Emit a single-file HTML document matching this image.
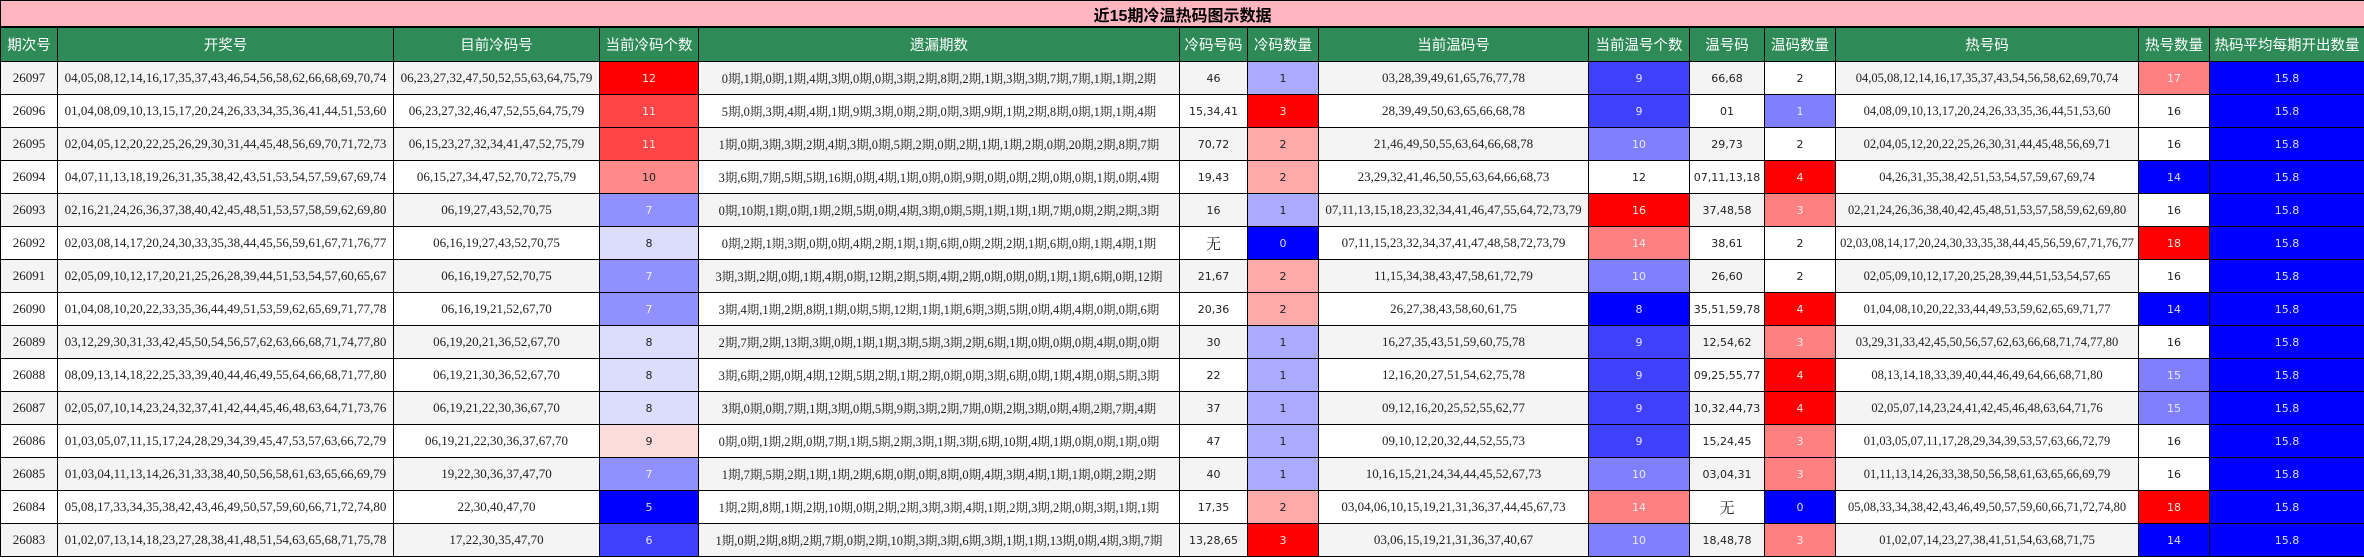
<!DOCTYPE html>
<html><head><meta charset="utf-8">
<style>
html,body{margin:0;padding:0;background:#fff;width:2364px;height:558px;overflow:hidden}
table{border-collapse:collapse;table-layout:fixed;width:2364px;font-family:"Liberation Serif","Noto Serif CJK SC","Noto Sans CJK SC",serif;font-size:13px;color:#222}
td,th{border:1px solid #000;text-align:center;padding:0;white-space:nowrap;overflow:hidden}
.t td{background:#ffb6c1;height:25px;font:bold 16px "Liberation Sans","Noto Sans CJK SC",sans-serif;color:#000;border-bottom:2px solid #000}
.h th{background:#2e8b57;color:#fff;height:33px;font:14.5px "Liberation Sans","Noto Sans CJK SC",sans-serif}
tr.d td{height:32px}
tr.g td{background:#f4f4f4}
.s{font-family:"DejaVu Sans","Noto Sans CJK SC",sans-serif;font-size:11px}
.y{font-size:12.5px}
.hc{font-size:12.5px}
tr td.c0{background:#ff0000;color:#f2e0e0}
tr td.c1{background:#ff4545;color:#f4e4e4}
tr td.c2{background:#ff8080;color:#fbe8e8}
tr td.c3{background:#ff8a8a}
tr td.pk{background:#ffaaaa}
tr td.lp{background:#ffdcdc}
tr td.lb{background:#dcdcff}
tr td.b1{background:#aaaaff}
tr td.b2{background:#8080ff;color:#e6e6ff}
tr td.b3{background:#9090ff;color:#eeeeff}
tr td.b4{background:#4040ff;color:#e0e0ff}
tr td.b5{background:#0000ff;color:#dcdcff}
tr td.w{background:#fff}
</style></head><body>
<table>
<colgroup><col style="width:57px"><col style="width:336px"><col style="width:206px"><col style="width:99px"><col style="width:481px"><col style="width:68px"><col style="width:71px"><col style="width:270px"><col style="width:101px"><col style="width:75px"><col style="width:71px"><col style="width:303px"><col style="width:71px"><col style="width:155px"></colgroup>
<tr class="t"><td colspan="14">近15期冷温热码图示数据</td></tr>
<tr class="h"><th>期次号</th><th>开奖号</th><th>目前冷码号</th><th>当前冷码个数</th><th>遗漏期数</th><th>冷码号码</th><th>冷码数量</th><th>当前温码号</th><th>当前温号个数</th><th>温号码</th><th>温码数量</th><th>热号码</th><th>热号数量</th><th>热码平均每期开出数量</th></tr>
<tr class="d g"><td>26097</td><td>04,05,08,12,14,16,17,35,37,43,46,54,56,58,62,66,68,69,70,74</td><td>06,23,27,32,47,50,52,55,63,64,75,79</td><td class="s c0">12</td><td class="y">0期,1期,0期,1期,4期,3期,0期,0期,3期,2期,8期,2期,1期,3期,3期,7期,7期,1期,1期,2期</td><td class="s">46</td><td class="s b1">1</td><td>03,28,39,49,61,65,76,77,78</td><td class="s b4">9</td><td class="s">66,68</td><td class="s w">2</td><td class="hc">04,05,08,12,14,16,17,35,37,43,54,56,58,62,69,70,74</td><td class="s c2">17</td><td class="s b5">15.8</td></tr>
<tr class="d"><td>26096</td><td>01,04,08,09,10,13,15,17,20,24,26,33,34,35,36,41,44,51,53,60</td><td>06,23,27,32,46,47,52,55,64,75,79</td><td class="s c1">11</td><td class="y">5期,0期,3期,4期,4期,1期,9期,3期,0期,2期,0期,3期,9期,1期,2期,8期,0期,1期,1期,4期</td><td class="s">15,34,41</td><td class="s c0">3</td><td>28,39,49,50,63,65,66,68,78</td><td class="s b4">9</td><td class="s">01</td><td class="s b2">1</td><td class="hc">04,08,09,10,13,17,20,24,26,33,35,36,44,51,53,60</td><td class="s">16</td><td class="s b5">15.8</td></tr>
<tr class="d g"><td>26095</td><td>02,04,05,12,20,22,25,26,29,30,31,44,45,48,56,69,70,71,72,73</td><td>06,15,23,27,32,34,41,47,52,75,79</td><td class="s c1">11</td><td class="y">1期,0期,3期,3期,2期,4期,3期,0期,5期,2期,0期,2期,1期,1期,2期,0期,20期,2期,8期,7期</td><td class="s">70,72</td><td class="s pk">2</td><td>21,46,49,50,55,63,64,66,68,78</td><td class="s b2">10</td><td class="s">29,73</td><td class="s w">2</td><td class="hc">02,04,05,12,20,22,25,26,30,31,44,45,48,56,69,71</td><td class="s w">16</td><td class="s b5">15.8</td></tr>
<tr class="d"><td>26094</td><td>04,07,11,13,18,19,26,31,35,38,42,43,51,53,54,57,59,67,69,74</td><td>06,15,27,34,47,52,70,72,75,79</td><td class="s c3">10</td><td class="y">3期,6期,7期,5期,5期,16期,0期,4期,1期,0期,0期,9期,0期,0期,2期,0期,0期,1期,0期,4期</td><td class="s">19,43</td><td class="s pk">2</td><td>23,29,32,41,46,50,55,63,64,66,68,73</td><td class="s w">12</td><td class="s">07,11,13,18</td><td class="s c0">4</td><td class="hc">04,26,31,35,38,42,51,53,54,57,59,67,69,74</td><td class="s b5">14</td><td class="s b5">15.8</td></tr>
<tr class="d g"><td>26093</td><td>02,16,21,24,26,36,37,38,40,42,45,48,51,53,57,58,59,62,69,80</td><td>06,19,27,43,52,70,75</td><td class="s b3">7</td><td class="y">0期,10期,1期,0期,1期,2期,5期,0期,4期,3期,0期,5期,1期,1期,1期,7期,0期,2期,2期,3期</td><td class="s">16</td><td class="s b1">1</td><td>07,11,13,15,18,23,32,34,41,46,47,55,64,72,73,79</td><td class="s c0">16</td><td class="s">37,48,58</td><td class="s c2">3</td><td class="hc">02,21,24,26,36,38,40,42,45,48,51,53,57,58,59,62,69,80</td><td class="s w">16</td><td class="s b5">15.8</td></tr>
<tr class="d"><td>26092</td><td>02,03,08,14,17,20,24,30,33,35,38,44,45,56,59,61,67,71,76,77</td><td>06,16,19,27,43,52,70,75</td><td class="s lb">8</td><td class="y">0期,2期,1期,3期,0期,0期,4期,2期,1期,1期,6期,0期,2期,2期,1期,6期,0期,1期,4期,1期</td><td style="font-size:15px">无</td><td class="s b5">0</td><td>07,11,15,23,32,34,37,41,47,48,58,72,73,79</td><td class="s c2">14</td><td class="s">38,61</td><td class="s w">2</td><td class="hc">02,03,08,14,17,20,24,30,33,35,38,44,45,56,59,67,71,76,77</td><td class="s c0">18</td><td class="s b5">15.8</td></tr>
<tr class="d g"><td>26091</td><td>02,05,09,10,12,17,20,21,25,26,28,39,44,51,53,54,57,60,65,67</td><td>06,16,19,27,52,70,75</td><td class="s b3">7</td><td class="y">3期,3期,2期,0期,1期,4期,0期,12期,2期,5期,4期,2期,0期,0期,0期,1期,1期,6期,0期,12期</td><td class="s">21,67</td><td class="s pk">2</td><td>11,15,34,38,43,47,58,61,72,79</td><td class="s b2">10</td><td class="s">26,60</td><td class="s w">2</td><td class="hc">02,05,09,10,12,17,20,25,28,39,44,51,53,54,57,65</td><td class="s w">16</td><td class="s b5">15.8</td></tr>
<tr class="d"><td>26090</td><td>01,04,08,10,20,22,33,35,36,44,49,51,53,59,62,65,69,71,77,78</td><td>06,16,19,21,52,67,70</td><td class="s b3">7</td><td class="y">3期,4期,1期,2期,8期,1期,0期,5期,12期,1期,1期,6期,3期,5期,0期,4期,4期,0期,0期,6期</td><td class="s">20,36</td><td class="s pk">2</td><td>26,27,38,43,58,60,61,75</td><td class="s b5">8</td><td class="s">35,51,59,78</td><td class="s c0">4</td><td class="hc">01,04,08,10,20,22,33,44,49,53,59,62,65,69,71,77</td><td class="s b5">14</td><td class="s b5">15.8</td></tr>
<tr class="d g"><td>26089</td><td>03,12,29,30,31,33,42,45,50,54,56,57,62,63,66,68,71,74,77,80</td><td>06,19,20,21,36,52,67,70</td><td class="s lb">8</td><td class="y">2期,7期,2期,13期,3期,0期,1期,1期,3期,5期,3期,2期,6期,1期,0期,0期,0期,4期,0期,0期</td><td class="s">30</td><td class="s b1">1</td><td>16,27,35,43,51,59,60,75,78</td><td class="s b4">9</td><td class="s">12,54,62</td><td class="s c2">3</td><td class="hc">03,29,31,33,42,45,50,56,57,62,63,66,68,71,74,77,80</td><td class="s w">16</td><td class="s b5">15.8</td></tr>
<tr class="d"><td>26088</td><td>08,09,13,14,18,22,25,33,39,40,44,46,49,55,64,66,68,71,77,80</td><td>06,19,21,30,36,52,67,70</td><td class="s lb">8</td><td class="y">3期,6期,2期,0期,4期,12期,5期,2期,1期,2期,0期,0期,3期,6期,0期,1期,4期,0期,5期,3期</td><td class="s">22</td><td class="s b1">1</td><td>12,16,20,27,51,54,62,75,78</td><td class="s b4">9</td><td class="s">09,25,55,77</td><td class="s c0">4</td><td class="hc">08,13,14,18,33,39,40,44,46,49,64,66,68,71,80</td><td class="s b2">15</td><td class="s b5">15.8</td></tr>
<tr class="d g"><td>26087</td><td>02,05,07,10,14,23,24,32,37,41,42,44,45,46,48,63,64,71,73,76</td><td>06,19,21,22,30,36,67,70</td><td class="s lb">8</td><td class="y">3期,0期,0期,7期,1期,3期,0期,5期,9期,3期,2期,7期,0期,2期,3期,0期,4期,2期,7期,4期</td><td class="s">37</td><td class="s b1">1</td><td>09,12,16,20,25,52,55,62,77</td><td class="s b4">9</td><td class="s">10,32,44,73</td><td class="s c0">4</td><td class="hc">02,05,07,14,23,24,41,42,45,46,48,63,64,71,76</td><td class="s b2">15</td><td class="s b5">15.8</td></tr>
<tr class="d"><td>26086</td><td>01,03,05,07,11,15,17,24,28,29,34,39,45,47,53,57,63,66,72,79</td><td>06,19,21,22,30,36,37,67,70</td><td class="s lp">9</td><td class="y">0期,0期,1期,2期,0期,7期,1期,5期,2期,3期,1期,3期,6期,10期,4期,1期,0期,0期,1期,0期</td><td class="s">47</td><td class="s b1">1</td><td>09,10,12,20,32,44,52,55,73</td><td class="s b4">9</td><td class="s">15,24,45</td><td class="s c2">3</td><td class="hc">01,03,05,07,11,17,28,29,34,39,53,57,63,66,72,79</td><td class="s w">16</td><td class="s b5">15.8</td></tr>
<tr class="d g"><td>26085</td><td>01,03,04,11,13,14,26,31,33,38,40,50,56,58,61,63,65,66,69,79</td><td>19,22,30,36,37,47,70</td><td class="s b3">7</td><td class="y">1期,7期,5期,2期,1期,1期,2期,6期,0期,0期,8期,0期,4期,3期,4期,1期,1期,0期,2期,2期</td><td class="s">40</td><td class="s b1">1</td><td>10,16,15,21,24,34,44,45,52,67,73</td><td class="s b2">10</td><td class="s">03,04,31</td><td class="s c2">3</td><td class="hc">01,11,13,14,26,33,38,50,56,58,61,63,65,66,69,79</td><td class="s w">16</td><td class="s b5">15.8</td></tr>
<tr class="d"><td>26084</td><td>05,08,17,33,34,35,38,42,43,46,49,50,57,59,60,66,71,72,74,80</td><td>22,30,40,47,70</td><td class="s b5">5</td><td class="y">1期,2期,8期,1期,2期,10期,0期,2期,2期,3期,3期,4期,1期,2期,3期,2期,0期,3期,1期,1期</td><td class="s">17,35</td><td class="s pk">2</td><td>03,04,06,10,15,19,21,31,36,37,44,45,67,73</td><td class="s c2">14</td><td style="font-size:15px">无</td><td class="s b5">0</td><td class="hc">05,08,33,34,38,42,43,46,49,50,57,59,60,66,71,72,74,80</td><td class="s c0">18</td><td class="s b5">15.8</td></tr>
<tr class="d g"><td>26083</td><td>01,02,07,13,14,18,23,27,28,38,41,48,51,54,63,65,68,71,75,78</td><td>17,22,30,35,47,70</td><td class="s b4">6</td><td class="y">1期,0期,2期,8期,2期,7期,0期,2期,10期,3期,3期,6期,3期,1期,1期,13期,0期,4期,3期,7期</td><td class="s">13,28,65</td><td class="s c0">3</td><td>03,06,15,19,21,31,36,37,40,67</td><td class="s b2">10</td><td class="s">18,48,78</td><td class="s c2">3</td><td class="hc">01,02,07,14,23,27,38,41,51,54,63,68,71,75</td><td class="s b5">14</td><td class="s b5">15.8</td></tr>
</table>
</body></html>
